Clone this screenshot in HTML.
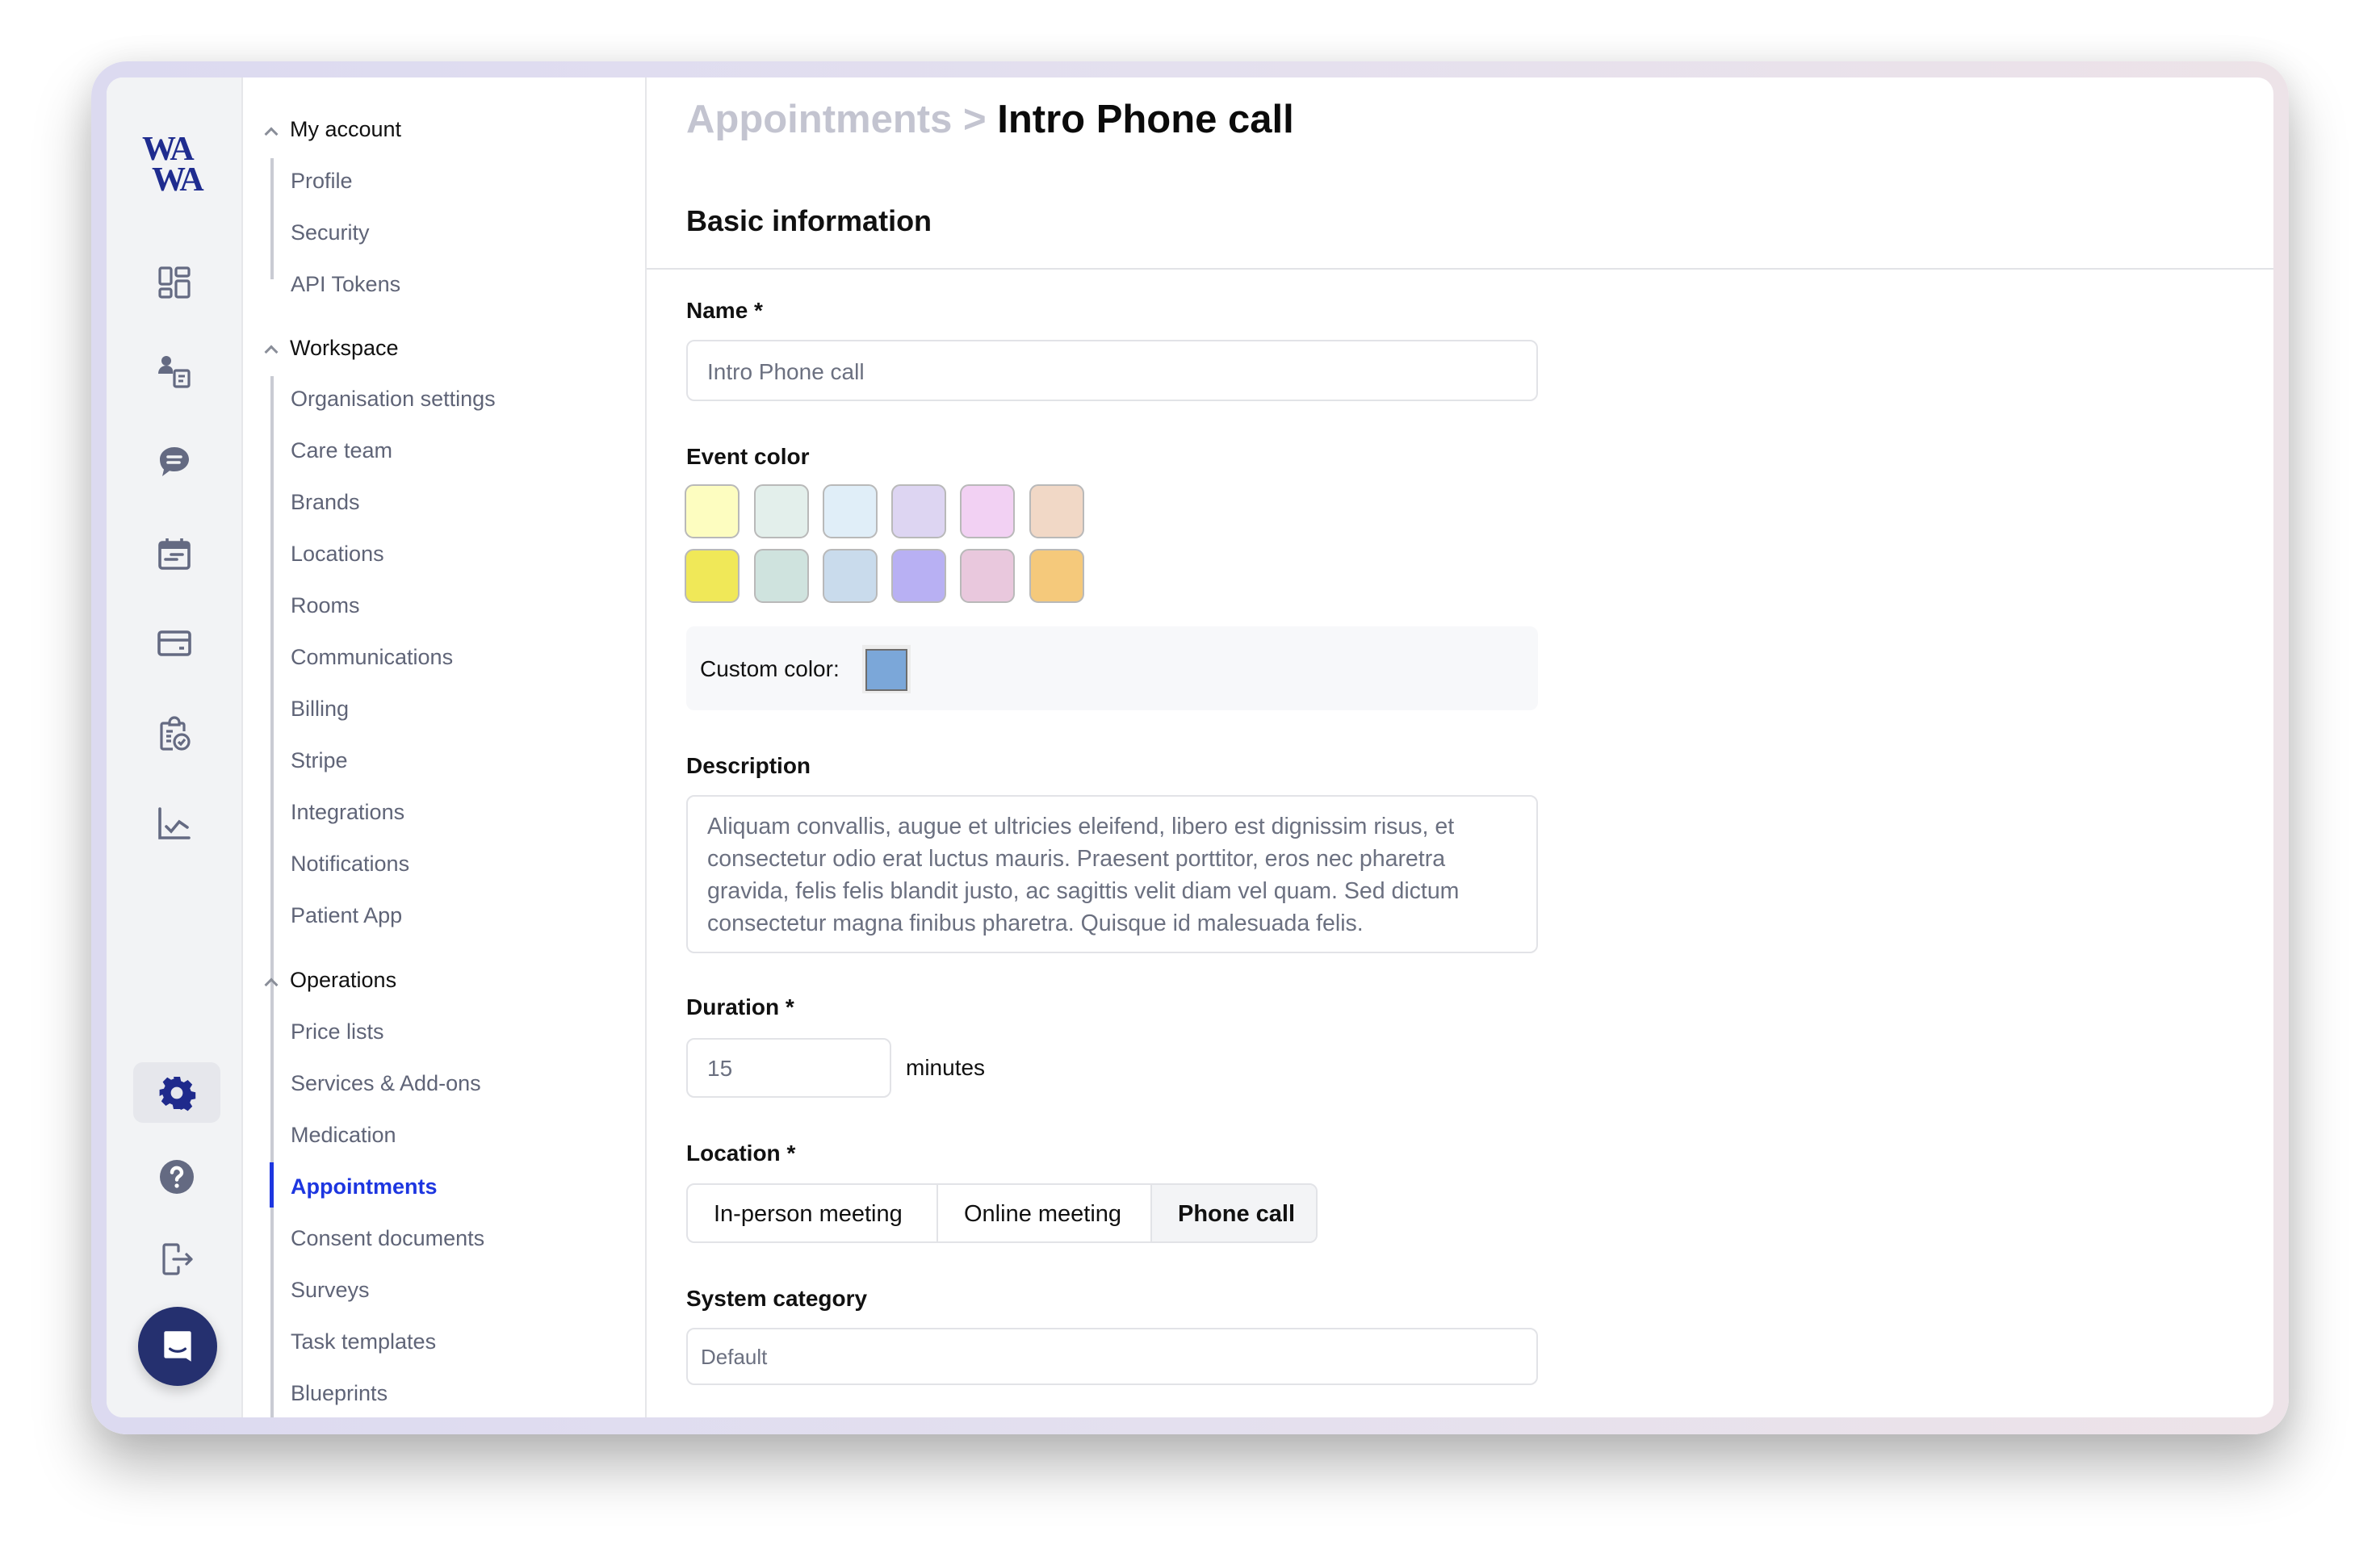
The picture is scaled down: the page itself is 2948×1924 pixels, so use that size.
<!DOCTYPE html>
<html><head><meta charset="utf-8">
<style>
*{box-sizing:border-box;margin:0;padding:0}
html,body{width:2948px;height:1924px;background:#fff;overflow:hidden;font-family:"Liberation Sans",Arial,sans-serif}
.abs{position:absolute}
#frame{left:113px;top:76px;width:2722px;height:1701px;border-radius:44px;background:linear-gradient(90deg,#dcdaf0 0%,#e4e0ef 50%,#ede3e8 100%);box-shadow:0 40px 70px rgba(0,0,0,.28),0 0 40px rgba(0,0,0,.08)}
#inner{left:132px;top:96px;width:2684px;height:1660px;border-radius:20px;background:#fff;overflow:hidden}
#rail{left:0;top:0;width:169px;height:1660px;background:#f2f3f5;border-right:2px solid #e6e7ea}
#sub{left:169px;top:0;width:500px;height:1660px;background:#fff;border-right:2px solid #e6e7ea}
.hd{position:absolute;left:227px;font-size:27px;color:#111;line-height:30px}
.chev{position:absolute;left:198px;width:12px;height:12px;border-left:3px solid #8a8e99;border-top:3px solid #8a8e99;transform:rotate(45deg)}
.it{position:absolute;left:228px;font-size:27px;color:#5f6477;line-height:30px;white-space:nowrap}
.vl{position:absolute;left:203px;width:4px;background:#c9cbd3}
.lbl{position:absolute;left:718px;font-size:28px;font-weight:bold;color:#111;line-height:32px}
.inp{position:absolute;left:718px;border:2px solid #e2e3e7;border-radius:10px;background:#fff;color:#6b7080;font-size:28px}
.sw{position:absolute;width:68px;height:67px;border:2px solid #b9b9b9;border-radius:11px}
.ic{position:absolute;left:60px;width:48px;height:48px}
</style></head><body>
<div id="frame" class="abs"></div>
<div id="inner" class="abs">
 <div id="rail" class="abs">
  <div class="abs" style="left:44px;top:70px;width:90px;font-family:'Liberation Serif',serif;font-weight:bold;color:#1f2c8f;font-size:42px;line-height:38px;letter-spacing:-3px">WA<br><span style="padding-left:12px">WA</span></div>
  <svg class="ic" style="top:230px" viewBox="0 0 24 24" fill="none" stroke="#646a82" stroke-width="1.6"><rect x="3" y="3" width="7" height="10" rx="1"/><rect x="13" y="3" width="8" height="5" rx="1"/><rect x="3" y="16" width="7" height="5" rx="1"/><rect x="13" y="11" width="8" height="10" rx="1"/></svg>
  <svg class="ic" style="top:341px" viewBox="0 0 24 24" fill="#646a82"><circle cx="7" cy="5" r="3"/><path d="M2 13c0-3 2-5 5-5s4 2 4 3v2H2z"/><rect x="12" y="11" width="9" height="10" rx="1" fill="none" stroke="#646a82" stroke-width="1.6"/><path d="M14.5 14.5h4M14.5 17.5h3" stroke="#646a82" stroke-width="1.5"/></svg>
  <svg class="ic" style="top:452px" viewBox="0 0 24 24"><path d="M12 3c5 0 9 3.3 9 7.5S17 18 12 18c-1 0-2-.1-3-.4L4.5 21l1-4.2C3.9 15.4 3 13.1 3 10.5 3 6.3 7 3 12 3z" fill="#646a82"/><path d="M8 9h8M8 12.5h7" stroke="#f2f3f5" stroke-width="1.8" stroke-linecap="round"/></svg>
  <svg class="ic" style="top:566px" viewBox="0 0 24 24"><rect x="3" y="5" width="18" height="16" rx="1.5" fill="none" stroke="#646a82" stroke-width="1.8"/><rect x="3" y="5" width="18" height="4" fill="#646a82"/><path d="M7.5 2.5v5M16.5 2.5v5" stroke="#646a82" stroke-width="1.8"/><path d="M10 12.5h7M6.5 15.5h7" stroke="#646a82" stroke-width="1.8" stroke-linecap="round"/></svg>
  <svg class="ic" style="top:677px" viewBox="0 0 24 24" fill="none" stroke="#646a82" stroke-width="1.8"><rect x="2.5" y="5" width="19" height="14" rx="1.5"/><path d="M2.5 10h19M15 15h3"/></svg>
  <svg class="ic" style="top:790px" viewBox="0 0 24 24" fill="none" stroke="#646a82" stroke-width="1.6"><path d="M9 5H5a1 1 0 0 0-1 1v14a1 1 0 0 0 1 1h6M15 5h2a1 1 0 0 1 1 1v4"/><path d="M9 6V4.5a3 3 0 0 1 6 0V6z"/><path d="M7 10h4M7 13h3M7 16h3"/><circle cx="16.5" cy="16.5" r="4.5"/><path d="M14.5 16.5l1.5 1.5 2.5-3"/></svg>
  <svg class="ic" style="top:900px" viewBox="0 0 24 24" fill="none" stroke="#646a82" stroke-width="1.8" stroke-linecap="round"><path d="M3 3v18h18"/><path d="M7 14l3 3 5-6 5 3.5"/></svg>
  <div class="abs" style="left:33px;top:1220px;width:108px;height:75px;border-radius:12px;background:#e6e7ec"></div>
  <svg class="abs" style="left:63px;top:1234px;width:48px;height:48px" viewBox="0 0 24 24"><path fill="#1f2a8c" fill-rule="evenodd" d="M10 2h4l.6 2.7 1.8.8 2.4-1.5 2.8 2.8-1.5 2.4.8 1.8 2.7.6v4l-2.7.6-.8 1.8 1.5 2.4-2.8 2.8-2.4-1.5-1.8.8L14 22h-4l-.6-2.7-1.8-.8-2.4 1.5-2.8-2.8 1.5-2.4-.8-1.8L1.3 14v-4l2.7-.6.8-1.8L3.3 5.2l2.8-2.8 2.4 1.5 1.8-.8zM12 8.3a3.7 3.7 0 1 0 0 7.4 3.7 3.7 0 0 0 0-7.4z"/></svg>
  <svg class="abs" style="left:63px;top:1338px;width:48px;height:48px" viewBox="0 0 24 24"><circle cx="12" cy="12" r="10.5" fill="#646a82"/><path d="M9 9.3a3 3 0 0 1 6 .2c0 2-3 2.2-3 4.3" stroke="#fff" stroke-width="2.2" fill="none" stroke-linecap="round"/><circle cx="12" cy="17.5" r="1.3" fill="#fff"/></svg>
  <svg class="abs" style="left:63px;top:1440px;width:48px;height:48px" viewBox="0 0 24 24" fill="none" stroke="#646a82" stroke-width="1.6" stroke-linecap="round" stroke-linejoin="round"><path d="M13 7V4a1 1 0 0 0-1-1H5a1 1 0 0 0-1 1v16a1 1 0 0 0 1 1h7a1 1 0 0 0 1-1v-3"/><path d="M10 12h11M18 9l3 3-3 3"/></svg>
  <div class="abs" style="left:39px;top:1523px;width:98px;height:98px;border-radius:50%;background:#25306f;box-shadow:0 6px 16px rgba(0,0,0,.2)"></div>
  <svg class="abs" style="left:63px;top:1547px;width:50px;height:50px" viewBox="0 0 24 24"><path d="M5 3h14a1 1 0 0 1 1 1v17l-3-2H5a1 1 0 0 1-1-1V4a1 1 0 0 1 1-1z" fill="#fff"/><path d="M7.5 13.5c2.5 2 6.5 2 9 0" stroke="#25306f" stroke-width="1.6" fill="none" stroke-linecap="round"/></svg>
 </div>
 <div id="sub" class="abs"></div>
 <div class="chev" style="top:64px"></div><div class="hd" style="top:49px">My account</div>
 <div class="vl" style="top:100px;height:150px"></div>
 <div class="it" style="top:113px">Profile</div>
 <div class="it" style="top:177px">Security</div>
 <div class="it" style="top:241px">API Tokens</div>
 <div class="chev" style="top:334px"></div><div class="hd" style="top:320px">Workspace</div>
 <div class="vl" style="top:370px;height:810px"></div>
 <div class="it" style="top:383px">Organisation settings</div>
 <div class="it" style="top:447px">Care team</div>
 <div class="it" style="top:511px">Brands</div>
 <div class="it" style="top:575px">Locations</div>
 <div class="it" style="top:639px">Rooms</div>
 <div class="it" style="top:703px">Communications</div>
 <div class="it" style="top:767px">Billing</div>
 <div class="it" style="top:831px">Stripe</div>
 <div class="it" style="top:895px">Integrations</div>
 <div class="it" style="top:959px">Notifications</div>
 <div class="it" style="top:1023px">Patient App</div>
 <div class="chev" style="top:1118px"></div><div class="hd" style="top:1103px">Operations</div>
 <div class="vl" style="top:1150px;height:510px"></div>
 <div class="it" style="top:1167px">Price lists</div>
 <div class="it" style="top:1231px">Services &amp; Add-ons</div>
 <div class="it" style="top:1295px">Medication</div>
 <div class="abs" style="left:202px;top:1344px;width:5px;height:56px;background:#1d36e0"></div>
 <div class="it" style="top:1359px;color:#1d36e0;font-weight:bold">Appointments</div>
 <div class="it" style="top:1423px">Consent documents</div>
 <div class="it" style="top:1487px">Surveys</div>
 <div class="it" style="top:1551px">Task templates</div>
 <div class="it" style="top:1615px">Blueprints</div>

 <div class="abs" style="left:718px;top:22px;font-size:49px;font-weight:bold;line-height:60px;white-space:nowrap"><span style="color:#c3c4d0">Appointments &gt;</span> <span style="color:#0b0b0b">Intro Phone call</span></div>
 <div class="abs" style="left:718px;top:158px;font-size:36px;font-weight:bold;color:#111;line-height:40px">Basic information</div>
 <div class="abs" style="left:669px;top:236px;width:2015px;height:2px;background:#e2e3e7"></div>

 <div class="lbl" style="top:273px">Name *</div>
 <div class="inp" style="top:325px;width:1055px;height:76px;padding:22px 0 0 24px">Intro Phone call</div>
 <div class="lbl" style="top:454px">Event color</div>
 <div class="sw" style="left:716px;top:504px;background:#fdfdc0"></div>
 <div class="sw" style="left:802px;top:504px;background:#e3efeb"></div>
 <div class="sw" style="left:887px;top:504px;background:#e0eef8"></div>
 <div class="sw" style="left:972px;top:504px;background:#ddd5f2"></div>
 <div class="sw" style="left:1057px;top:504px;background:#f2d1f3"></div>
 <div class="sw" style="left:1143px;top:504px;background:#f1d8c6"></div>
 <div class="sw" style="left:716px;top:584px;background:#f0e858"></div>
 <div class="sw" style="left:802px;top:584px;background:#cfe3de"></div>
 <div class="sw" style="left:887px;top:584px;background:#c9dbec"></div>
 <div class="sw" style="left:972px;top:584px;background:#b8b0f3"></div>
 <div class="sw" style="left:1057px;top:584px;background:#e9c8dd"></div>
 <div class="sw" style="left:1143px;top:584px;background:#f5c97b"></div>
 <div class="abs" style="left:718px;top:680px;width:1055px;height:104px;border-radius:10px;background:#f7f8fa"></div>
 <div class="abs" style="left:735px;top:717px;font-size:28px;color:#111;line-height:32px">Custom color:</div>
 <div class="abs" style="left:936px;top:703px;width:60px;height:60px;background:#ececec"></div>
 <div class="abs" style="left:940px;top:708px;width:52px;height:52px;background:#7ba7d9;border:2px solid #6d6d6d"></div>
 <div class="lbl" style="top:837px">Description</div>
 <div class="inp" style="top:889px;width:1055px;height:196px;padding:17px 0 0 24px;font-size:28.5px;line-height:40px;white-space:nowrap">Aliquam convallis, augue et ultricies eleifend, libero est dignissim risus, et<br>consectetur odio erat luctus mauris. Praesent porttitor, eros nec pharetra<br>gravida, felis felis blandit justo, ac sagittis velit diam vel quam. Sed dictum<br>consectetur magna finibus pharetra. Quisque id malesuada felis.</div>
 <div class="lbl" style="top:1136px">Duration *</div>
 <div class="inp" style="top:1190px;width:254px;height:74px;padding:20px 0 0 24px">15</div>
 <div class="abs" style="left:990px;top:1211px;font-size:28px;color:#111">minutes</div>
 <div class="lbl" style="top:1317px">Location *</div>
 <div class="abs" style="left:718px;top:1370px;width:782px;height:74px;border:2px solid #e2e3e7;border-radius:10px;overflow:hidden;display:flex;font-size:29px;color:#111">
  <div style="width:310px;border-right:2px solid #e2e3e7;padding:20px 0 0 32px">In-person meeting</div>
  <div style="width:265px;border-right:2px solid #e2e3e7;padding:20px 0 0 32px">Online meeting</div>
  <div style="flex:1;background:#f3f4f6;padding:20px 0 0 32px;font-weight:bold">Phone call</div>
 </div>
 <div class="lbl" style="top:1497px">System category</div>
 <div class="inp" style="top:1549px;width:1055px;height:71px;padding:19px 0 0 16px;font-size:26px">Default</div>
</div>
</body></html>
